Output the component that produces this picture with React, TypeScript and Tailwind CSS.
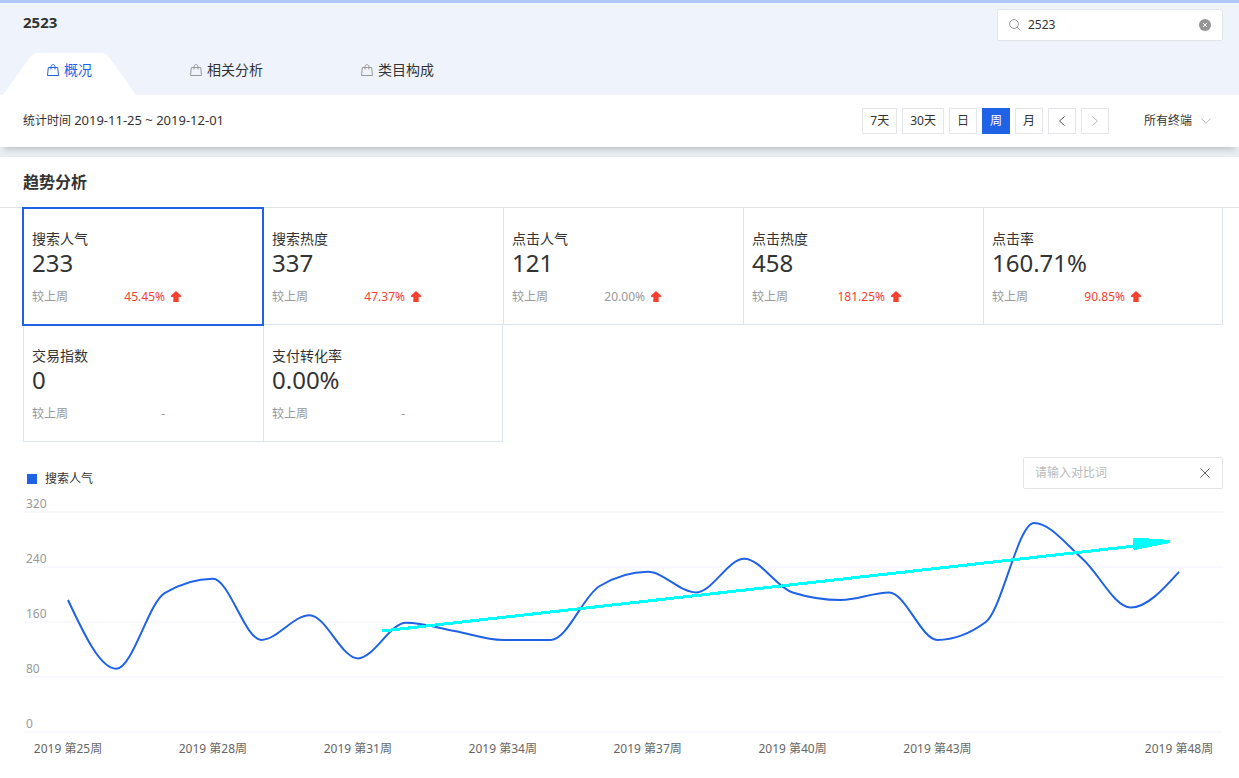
import { useState } from "react";

const TABS = ["概况", "相关分析", "类目构成"];

const RANGES = ["7天", "30天", "日", "周", "月"];

interface Metric {
  name: string;
  value: string;
  change: string | null;
  muted?: boolean;
}

const METRICS: Metric[] = [
  { name: "搜索人气", value: "233", change: "45.45%" },
  { name: "搜索热度", value: "337", change: "47.37%" },
  { name: "点击人气", value: "121", change: "20.00%", muted: true },
  { name: "点击热度", value: "458", change: "181.25%" },
  { name: "点击率", value: "160.71%", change: "90.85%" },
  { name: "交易指数", value: "0", change: null },
  { name: "支付转化率", value: "0.00%", change: null },
];

// One value per week, starting at week 25
const SERIES = [
  192, 92, 202, 223, 134, 170, 107, 159, 147, 134, 134, 212,
  233, 203, 252, 203, 192, 203, 134, 160, 304, 252, 181, 233,
];
const FIRST_WEEK = 25;
const LABELLED_WEEKS = [25, 28, 31, 34, 37, 40, 43, 48];
const Y_TICKS = [320, 240, 160, 80, 0];

const CHART = { width: 1200, height: 280, left: 45, right: 1156, base: 243, top: 23, max: 320 };

const xOf = (i: number) => CHART.left + (i * (CHART.right - CHART.left)) / (SERIES.length - 1);
const yOf = (v: number) => CHART.base - (v / CHART.max) * (CHART.base - CHART.top);

// Monotone cubic, so the line never overshoots a data point
function smoothPath(values: number[]) {
  const pts = values.map((v, i) => [xOf(i), yOf(v)]);
  const n = pts.length;
  const secants = pts.slice(1).map((p, i) => (p[1] - pts[i][1]) / (p[0] - pts[i][0]));
  const tangents = pts.map((_, i) => {
    if (i === 0 || i === n - 1) return 0;
    const a = secants[i - 1];
    const b = secants[i];
    return (Math.sign(a) + Math.sign(b)) * Math.min(Math.abs(a), Math.abs(b), 0.25 * Math.abs(a + b));
  });
  tangents[0] = (3 * secants[0] - tangents[1]) / 2;
  tangents[n - 1] = (3 * secants[n - 2] - tangents[n - 2]) / 2;

  let d = `M${pts[0][0]},${pts[0][1]}`;
  for (let i = 0; i < n - 1; i++) {
    const [x0, y0] = pts[i];
    const [x1, y1] = pts[i + 1];
    const h = (x1 - x0) / 3;
    d += `C${x0 + h},${y0 + h * tangents[i]} ${x1 - h},${y1 - h * tangents[i + 1]} ${x1},${y1}`;
  }
  return d;
}

function BagIcon() {
  return (
    <svg className="w-3 h-3 flex-shrink-0" viewBox="0 0 12 12" fill="none" stroke="currentColor" aria-hidden="true">
      <path d="M1.3 3.5h9.4l.8 8H.5z" />
      <path d="M4 5.5V2.8C4 1.4 4.9.6 6 .6s2 .8 2 2.2v2.7" />
    </svg>
  );
}

function UpArrow() {
  return (
    <svg className="w-[10px] h-[11px]" viewBox="0 0 10 11" fill="#f43f33" aria-hidden="true">
      <path d="M5 0l5 4.5V6H7.7v5H2.3V6H0V4.5z" />
    </svg>
  );
}

function MetricCard({ metric, active, lastInRow, onSelect }: { metric: Metric; active: boolean; lastInRow: boolean; onSelect: () => void }) {
  return (
    <button
      type="button"
      onClick={onSelect}
      aria-pressed={active}
      className={`block text-left border-l border-b border-[#dce4ee] pl-2 pt-5 pb-[17px] ${lastInRow ? "border-r" : ""} ${active ? "relative z-10 outline-2 -outline-offset-1 outline-[#1f62e6]" : ""}`}
    >
      <span className="block text-sm leading-[22px]">{metric.name}</span>
      <span className="block text-2xl leading-[26px]">{metric.value}</span>
      <span className="mt-[10px] flex items-center text-xs leading-[21px] text-[#999]">
        <span className="flex w-[133px] justify-between">
          <span>较上周</span>
          <span className={metric.change && !metric.muted ? "text-[#f43f33]" : ""}>{metric.change ?? "-"}</span>
        </span>
        {metric.change && <span className="ml-1.5"><UpArrow /></span>}
      </span>
    </button>
  );
}

function TrendChart() {
  return (
    <svg className="block w-full h-auto" viewBox={`0 0 ${CHART.width} ${CHART.height}`} role="img" aria-label="搜索人气">
      {Y_TICKS.map((t) => (
        <g key={t}>
          <line x1="1" x2="1200" y1={yOf(t)} y2={yOf(t)} stroke="#f8f9fe" strokeWidth="2" />
          <text x="3" y={yOf(t) - 4} fontSize="12" fill="#999">{t}</text>
        </g>
      ))}
      {LABELLED_WEEKS.map((w) => (
        <text key={w} x={xOf(w - FIRST_WEEK)} y="264" fontSize="12" fill="#666" textAnchor="middle">{`2019 第${w}周`}</text>
      ))}
      <path d={smoothPath(SERIES)} fill="none" stroke="#1f62e6" strokeWidth="2" />
      {/* Trend arrow */}
      <g shapeRendering="crispEdges" fill="#00ffff">
        <line x1="359" y1="142" x2="1112" y2="57" stroke="#00ffff" strokeWidth="3" />
        <path d="M1110 49h9l28 2v3l-26 5-9 2-2-1z" />
      </g>
    </svg>
  );
}

export default function App() {
  const [tab, setTab] = useState(0);
  const [range, setRange] = useState("周");
  const [metric, setMetric] = useState(0);
  const [query, setQuery] = useState("2523");
  const [compare, setCompare] = useState("");

  return (
    <div className="min-h-screen bg-white text-[#333] font-['Noto_Sans','Noto_Sans_CJK_SC',sans-serif]">
      {/* Header */}
      <header className="border-t-[3px] border-[#b0c7f9] bg-[#eff3fc] pt-1.5">
        <div className="flex items-start justify-between pl-[23px] pr-4">
          <h1 className="text-[15px] leading-[26px] font-bold">2523</h1>
          <div className="flex h-8 w-[226px] items-center rounded-xs border border-[#e3e5e9] bg-white pl-[11px] pr-3">
            <svg className="w-3 h-3 flex-shrink-0" viewBox="0 0 12 12" fill="none" stroke="#999" aria-hidden="true">
              <circle cx="5" cy="5" r="4.4" />
              <path d="M8.2 8.2l3.3 3.3" />
            </svg>
            <input
              aria-label="搜索词"
              value={query}
              onChange={(e) => setQuery(e.target.value)}
              className="ml-[7px] min-w-0 flex-1 bg-transparent text-xs outline-none"
            />
            <button type="button" aria-label="清除" onClick={() => setQuery("")} className="-mr-px">
              <svg className="block w-3 h-3" viewBox="0 0 12 12" aria-hidden="true">
                <circle cx="6" cy="6" r="6" fill="#949494" />
                <path d="M4 4l4 4M8 4l-4 4" stroke="#fff" strokeWidth="1" />
              </svg>
            </button>
          </div>
        </div>

        <nav className="mt-3 flex gap-[10px] pl-[3px]">
          {TABS.map((label, i) => (
            <button
              key={label}
              type="button"
              onClick={() => setTab(i)}
              className={`relative h-[42px] px-11 pb-[9px] text-sm ${tab === i ? "text-[#1f62e6]" : "text-[#333]"}`}
            >
              {tab === i && (
                <svg className="absolute inset-0 h-full w-full" viewBox="0 0 133 42" preserveAspectRatio="none" aria-hidden="true">
                  <path d="M0 42L27 4Q30 0 35 0H99Q103 0 106 4L133 42z" fill="#fff" />
                </svg>
              )}
              <span className="relative flex items-center gap-[5px]">
                <span className={tab === i ? "" : "text-[#999]"}><BagIcon /></span>
                {label}
              </span>
            </button>
          ))}
        </nav>
      </header>

      {/* Date filter */}
      <div className="relative z-10 flex h-[52px] items-center bg-white pl-[23px] pr-7 text-xs shadow-[0_6px_6px_-4px_rgba(0,0,0,0.2)]">
        <p>
          统计时间 <span className="text-[13px]">2019-11-25 ~ 2019-12-01</span>
        </p>
        <div className="ml-auto flex gap-[5px]">
          {RANGES.map((r) => (
            <button
              key={r}
              type="button"
              onClick={() => setRange(r)}
              className={`h-[26px] min-w-7 border px-[7px] ${range === r ? "border-[#1f62e6] bg-[#1f62e6] text-white" : "border-[#e3e5e9]"}`}
            >
              {r}
            </button>
          ))}
          <button type="button" aria-label="上一周" className="flex h-[26px] w-7 items-center justify-center border border-[#e3e5e9]">
            <svg className="w-2 h-[10px]" viewBox="0 0 8 10" fill="none" stroke="#555" aria-hidden="true"><path d="M6.5.5L1.5 5l5 4.5" /></svg>
          </button>
          <button type="button" aria-label="下一周" disabled className="flex h-[26px] w-7 items-center justify-center border border-[#e3e5e9]">
            <svg className="w-2 h-[10px]" viewBox="0 0 8 10" fill="none" stroke="#bbb" aria-hidden="true"><path d="M1.5.5l5 4.5-5 4.5" /></svg>
          </button>
        </div>
        <div className="relative ml-[35px] flex items-center">
          <select aria-label="终端" className="w-[67px] appearance-none bg-transparent outline-none">
            <option>所有终端</option>
            <option>PC端</option>
            <option>无线端</option>
          </select>
          <svg className="pointer-events-none absolute right-0 w-[10px] h-[6px]" viewBox="0 0 10 6" fill="none" stroke="#bbb" aria-hidden="true"><path d="M.5.5L5 5.3 9.5.5" /></svg>
        </div>
      </div>
      <div className="h-[10px] bg-[#e9ecf1]" />

      {/* Trend analysis */}
      <main>
        <h2 className="border-b border-[#e3e5e9] pl-[23px] text-base leading-[50px] font-bold">趋势分析</h2>
        <div className="pl-[23px] pr-4">
          <div className="grid grid-cols-5">
            {METRICS.map((m, i) => (
              <MetricCard
                key={m.name}
                metric={m}
                active={metric === i}
                lastInRow={i % 5 === 4 || i === METRICS.length - 1}
                onSelect={() => setMetric(i)}
              />
            ))}
          </div>

          <div className="mt-[15px] flex items-end justify-between pl-1 text-xs">
            <div className="flex items-center gap-2 leading-5">
              <span className="h-[10px] w-[10px] bg-[#1f62e6]" />
              搜索人气
            </div>
            <div className="flex h-8 w-[200px] items-center rounded-xs border border-[#e3e5e9] px-[11px]">
              <input
                aria-label="对比词"
                placeholder="请输入对比词"
                value={compare}
                onChange={(e) => setCompare(e.target.value)}
                className="min-w-0 flex-1 bg-transparent outline-none placeholder:text-[#bbb]"
              />
              <button type="button" aria-label="清空对比词" onClick={() => setCompare("")} className="px-px">
                <svg className="block w-[10px] h-[10px]" viewBox="0 0 10 10" fill="none" stroke="#666" aria-hidden="true"><path d="M.5.5l9 9M9.5.5l-9 9" /></svg>
              </button>
            </div>
          </div>

          <TrendChart />
        </div>
      </main>
    </div>
  );
}
